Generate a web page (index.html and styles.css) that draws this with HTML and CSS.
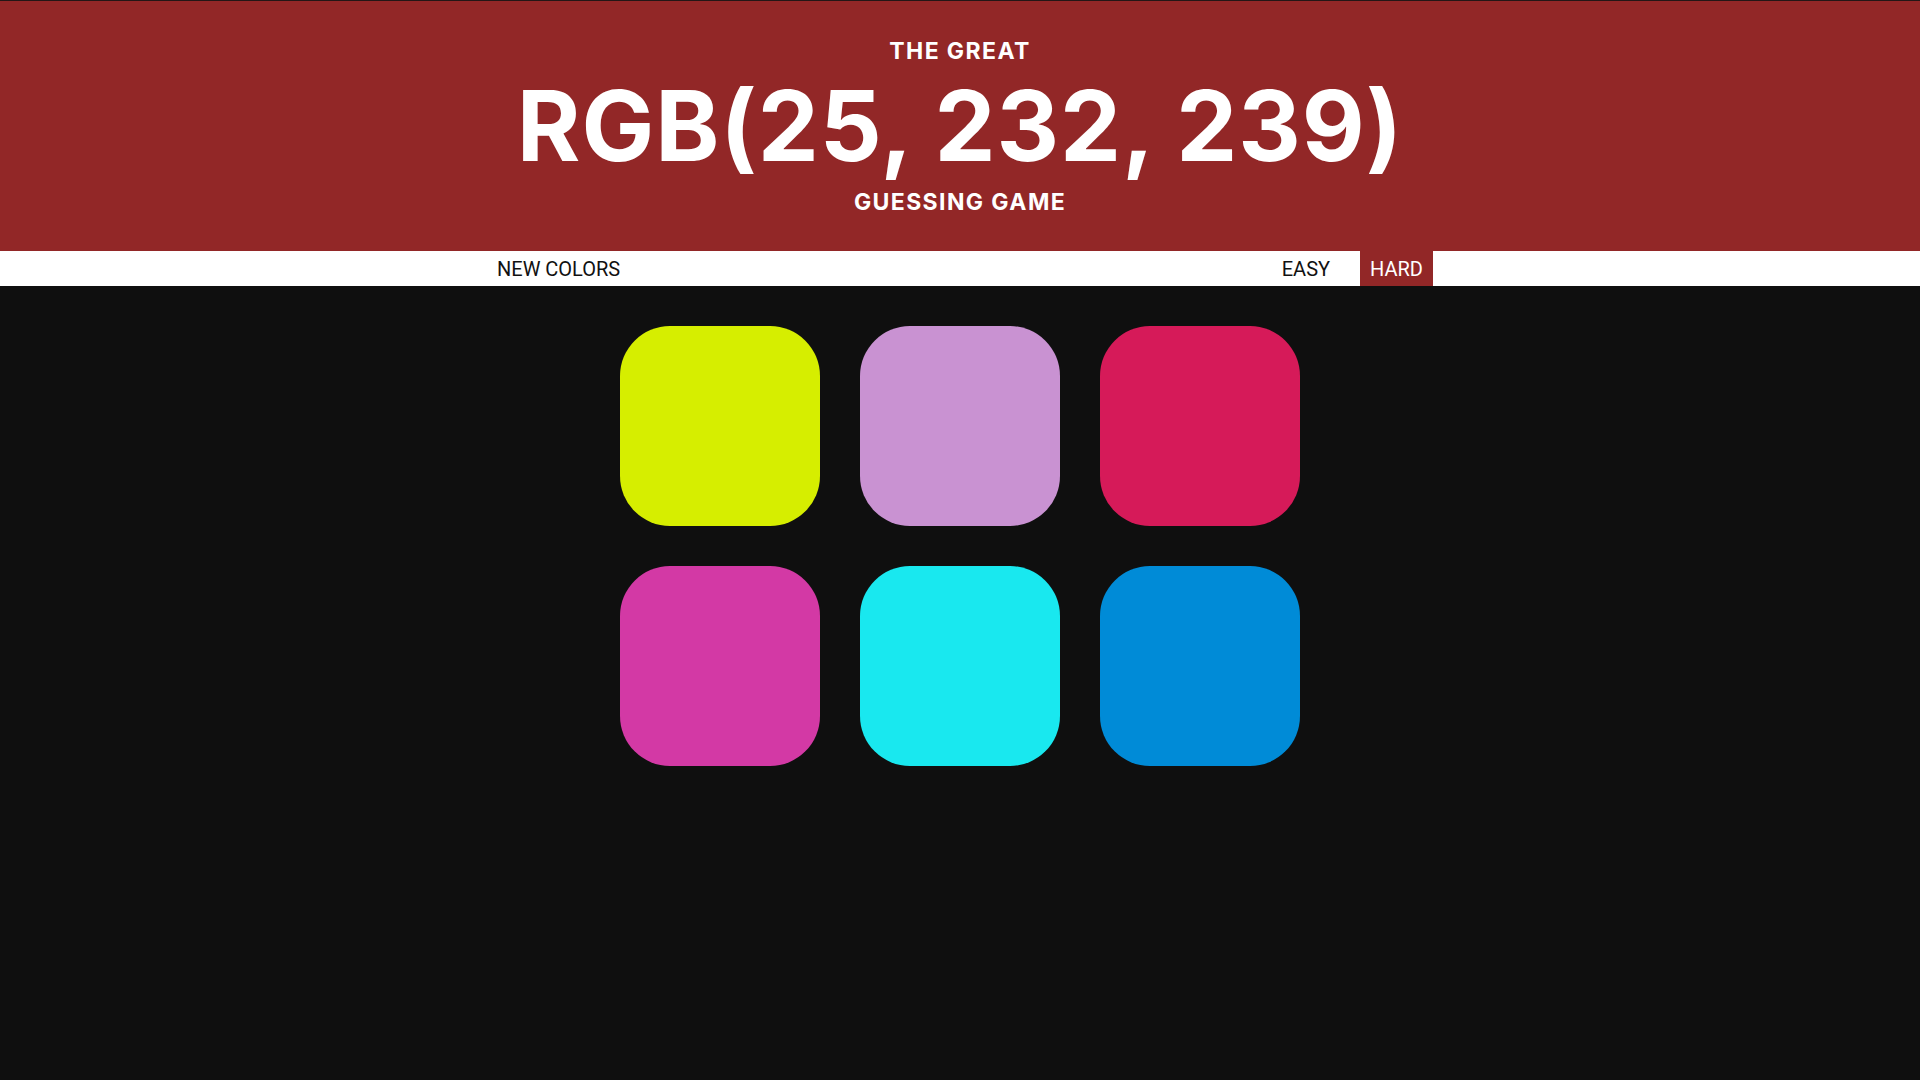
FILE: index.html
```html
<!DOCTYPE html>
<html lang="en">
<head>
<meta charset="utf-8">
<title>The Great RGB Guessing Game</title>
<link rel="stylesheet" href="styles.css">
</head>
<body>
<header class="hero">
  <h1 class="title">
    <span class="title-top">THE GREAT</span>
    <span class="title-rgb">RGB(25, 232, 239)</span>
    <span class="title-bottom">GUESSING GAME</span>
  </h1>
</header>
<nav class="strip">
  <div class="strip-inner">
    <button class="btn">NEW COLORS</button>
    <span class="message"></span>
    <div class="modes">
      <button class="btn">EASY</button>
      <button class="btn selected">HARD</button>
    </div>
  </div>
</nav>
<main class="board">
  <div class="square sq-yellow"></div>
  <div class="square sq-lilac"></div>
  <div class="square sq-red"></div>
  <div class="square sq-magenta"></div>
  <div class="square sq-cyan"></div>
  <div class="square sq-blue"></div>
</main>
</body>
</html>
```
FILE: styles.css
```css
html, body {
  margin: 0;
  padding: 0;
  background: #0f0f0f;
  height: 100%;
}
body {
  border-top: 1px solid #241616;
  box-sizing: border-box;
}
.hero {
  background: #922727;
  height: 250px;
  box-sizing: border-box;
  padding-top: 35px;
  text-align: center;
  color: #ffffff;
}
.title {
  margin: 0;
  font-family: Inter, "Open Sans", sans-serif;
  font-weight: 700;
  text-transform: uppercase;
}
.title-top, .title-bottom {
  display: block;
  font-size: 23px;
  line-height: 30px;
  letter-spacing: 1.4px;
}
.title-bottom {
  margin-top: 2px;
}
.title-rgb {
  display: block;
  font-size: 97px;
  line-height: 119px;
  letter-spacing: 0.9px;
}
.strip {
  background: #ffffff;
  height: 35px;
}
.strip-inner {
  width: 946px;
  margin: 0 auto;
  height: 100%;
  display: flex;
  align-items: stretch;
  justify-content: space-between;
}
.modes {
  display: flex;
  gap: 20px;
}
.btn {
  border: none;
  background: transparent;
  margin: 0;
  padding: 0 10px;
  font-family: Roboto, "Liberation Sans", sans-serif;
  font-size: 20px;
  color: #111111;
  cursor: pointer;
  height: 100%;
}
.btn.selected {
  background: #922727;
  color: #ffffff;
}
.board {
  display: grid;
  grid-template-columns: repeat(3, 200px);
  gap: 40px;
  justify-content: center;
  padding-top: 40px;
}
.square {
  width: 200px;
  height: 200px;
  border-radius: 50px;
}
.sq-yellow { background: #d6ee00; }
.sq-lilac { background: #c992d2; }
.sq-red { background: #d61a59; }
.sq-magenta { background: #d339a5; }
.sq-cyan { background: #19e8ef; }
.sq-blue { background: #008bd7; }
```
